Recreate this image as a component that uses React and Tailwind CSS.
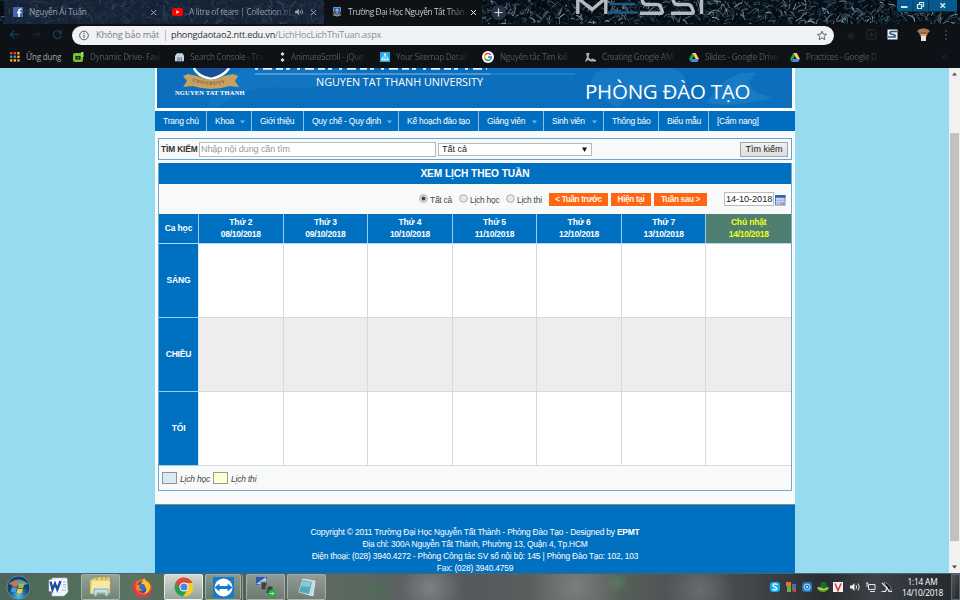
import React from "react";

const UI = "font-['Open_Sans','Noto_Sans',sans-serif]";
const ARIAL = "font-['Liberation_Sans',Arial,sans-serif]";

// Deterministic grass-like strokes for the browser theme
function makeBlades(count, seed) {
  let s = seed;
  const rnd = () => {
    s = (s * 16807) % 2147483647;
    return s / 2147483647;
  };
  const tones = ["#2d4250", "#1d4a60", "#5b737f", "#16303e", "#8a9ca5", "#000508", "#02080d"];
  return Array.from({ length: count }, () => {
    const x = rnd() * 960;
    const y = rnd() * 24;
    const dx = (rnd() - 0.5) * 16;
    const dy = (rnd() - 0.5) * 14;
    return {
      d: `M${x.toFixed(1)} ${y.toFixed(1)}q${(dx / 2 + 1).toFixed(1)} ${(dy / 2 - 2).toFixed(1)} ${dx.toFixed(1)} ${dy.toFixed(1)}`,
      c: tones[Math.floor(rnd() * tones.length)],
      w: 0.5 + rnd() * 0.7,
    };
  });
}
const blades = makeBlades(2400, 4217);

function Grass() {
  return (
    <svg className="absolute inset-0" width="960" height="24" viewBox="0 0 960 24">
      <rect width="960" height="24" fill="#070f17" />
      {blades.map((b, i) => (
        <path key={i} d={b.d} stroke={b.c} strokeWidth={b.w} fill="none" />
      ))}
      <rect x="4" width="320" height="24" fill="#1c2a40" opacity=".76" />
      <path d="M164 5v14" stroke="#3b4a5e" />
      <g stroke="#b4bac0" strokeWidth="3.4" fill="none">
        <path d="M577.8 14V-2L592 9.500 605.800-2V14" />
        <path d="M640 13.300H660.500Q663 13.300 662 10.500L660.500 7Q659.500 4.500 656.500 4.500H646Q643 4.500 642-1" />
        <path d="M671 13.300H691.500Q694 13.300 693 10.500L691.500 7Q690.500 4.500 687.500 4.500H677Q674 4.500 673-1" />
        <path d="M701.500 14V-2" />
      </g>
      <path d="M610 4h25M608 12.500h29" stroke="#1c5a84" strokeWidth="2.600" />
    </svg>
  );
}

function Close({ color = "#98a3ad" }) {
  return (
    <svg width="7" height="7" viewBox="0 0 7 7" className="shrink-0">
      <path d="M1 1l5 5M6 1L1 6" stroke={color} strokeWidth="1" />
    </svg>
  );
}

function Crest() {
  return (
    <svg width="10" height="10" viewBox="0 0 10 10" className="shrink-0">
      <path d="M1.500.5h7v4Q8 7 5 8.500 2 7 1.500 4.500z" fill="#2454a8" stroke="#a9bdd8" strokeWidth=".7" />
      <path d="M3 3h4M5 1.500v5" stroke="#dce6f2" strokeWidth=".8" />
      <path d="M.8 7.500Q5 10 9.200 7.500" stroke="#ab925b" strokeWidth="1.300" fill="none" />
    </svg>
  );
}

function TabStrip() {
  return (
    <div className="relative h-6 overflow-hidden bg-black">
      <Grass />
      <div className="relative flex h-6 text-[8.3px] leading-6 tracking-[-0.22px]">
        <div className="flex w-[168px] items-center pl-[13px] text-[#99a2ab]">
          <svg width="10" height="10" viewBox="0 0 10 10"><rect width="10" height="10" fill="#4167b2" /><path d="M6.800 10V6.200h1.400l.2-1.500H6.800v-1q0-.7.8-.7h.9V1.600H7.100Q5.200 1.600 5.200 3.500v1.200H4v1.500h1.200V10z" fill="#fff" /></svg>
          <span className="ml-[6px] w-[121px] whitespace-nowrap">Nguyễn Ái Tuấn</span>
          <Close />
        </div>
        <div className="flex w-[156px] items-center pl-1 text-[#8c959f]">
          <svg width="11" height="8" viewBox="0 0 11 8"><rect width="11" height="8" rx="1.800" fill="#f00" /><path d="M4.300 2.200v3.600L7.500 4z" fill="#fff" /></svg>
          <span className="ml-[6px] w-[106px] whitespace-nowrap bg-gradient-to-r from-[#99a2ab] from-80% to-[#2a3648] bg-clip-text tracking-[-0.3px] text-transparent">A litre of tears | Collection of</span>
          <svg width="9" height="8" viewBox="0 0 9 8"><path d="M0 2.800h1.700L4 1v6L1.700 5.200H0z" fill="#97a2ad" /><path d="M5.200 2.500q1 1.500 0 3M6.700 1.500q1.800 2.500 0 5" stroke="#97a2ad" strokeWidth=".8" fill="none" /></svg>
          <span className="w-[6px]" />
          <Close />
        </div>
        <div className="flex w-[158px] items-center rounded-t-[4px] bg-[#0e1217] pl-2 text-[#d5d8da]">
          <Crest />
          <span className="ml-[6px] w-[122px] whitespace-nowrap bg-gradient-to-r from-[#d5d8da] from-80% to-[#2b2f34] to-97% bg-clip-text tracking-[-0.38px] text-transparent">Trường Đại Học Nguyễn Tất Thàn</span>
          <Close color="#e8eaec" />
        </div>
        <div className="flex w-[415px] items-center pl-[9px]">
          <svg width="15" height="15" viewBox="0 0 15 15"><circle cx="7.500" cy="7.500" r="7.500" fill="#273447" /><path d="M3.500 7.500h8M7.500 3.500v8" stroke="#d5dadf" strokeWidth="1.200" /></svg>
        </div>
        <div className="h-3 w-[60px] overflow-hidden rounded-b-[2px] border-b border-[#07304a] bg-[#05598c]">
          <svg width="60" height="12" viewBox="0 0 60 12">
            <path d="M16 0v12M31.500 0v12" stroke="#033b60" />
            <path d="M4 7h6.500" stroke="#d6e4ec" strokeWidth="2" />
            <path d="M20.500 4.500h4v4h-4zM22.500 4V2.500h4v4H25" stroke="#d6e4ec" strokeWidth="1.200" fill="none" />
            <path d="M43.500 3.200l4.500 4.500M48 3.200l-4.500 4.500" stroke="#d6e4ec" strokeWidth="1.500" />
          </svg>
        </div>
      </div>
    </div>
  );
}

function Toolbar() {
  return (
    <div className="flex h-[22px] items-center bg-[#0e1217]">
      <svg width="72" height="22" viewBox="0 0 72 22" fill="none" strokeWidth="1.300">
        <path d="M19 10.500h-8.500M14.200 6.500l-4 4 4 4" stroke="#123d51" />
        <path d="M32 10.500h8M36.500 7l3.500 3.500-3.500 3.500" stroke="#122631" />
        <path d="M60.500 8A4 4 0 1 0 61.300 11.500" stroke="#124459" />
        <path d="M61.800 6v3.700h-3.700z" fill="#124459" stroke="none" />
      </svg>
      <div className="flex h-[19px] w-[762px] items-center rounded-full bg-[#f1f2f3] text-[9.2px]">
        <svg width="24" height="19" viewBox="0 0 24 19"><circle cx="12" cy="9.500" r="4.300" fill="none" stroke="#55585b" /><path d="M12 8.700v3M12 6.800v1.100" stroke="#55585b" strokeWidth="1.100" /></svg>
        <span className="w-[69px] whitespace-nowrap tracking-[-0.17px] text-[#777b7e]">Không bảo mật</span>
        <span className="mr-[5px] h-[11px] w-px bg-[#bcbec0]" />
        <span className="flex-1 whitespace-nowrap tracking-[-0.21px] text-[#8b8f92]"><span className="text-[#303336]">phongdaotao2.ntt.edu.vn</span>/LichHocLichThiTuan.aspx</span>
        <svg width="24" height="19" viewBox="0 0 24 19"><path d="M12 5.200l1.300 2.900 3.200.3-2.400 2.100.7 3.100L12 11.900l-2.800 1.700.7-3.100-2.400-2.100 3.200-.3z" fill="none" stroke="#606467" strokeWidth="1" /></svg>
      </div>
      <svg width="126" height="22" viewBox="0 0 126 22">
        <path d="M13 12l4-4 4 4-2 3h-4z" fill="#1a1f24" />
        <rect x="33" y="6" width="9" height="9" rx="1" fill="none" stroke="#242a30" /><path d="M37.500 8v5M35 10.500h5" stroke="#242a30" />
        <rect x="53.500" y="5.500" width="10" height="10" fill="#e8eef2" /><path d="M63 7.500h-5q-2.500 0-2 1.500t3 1.500 2 2.500h-7" stroke="#285d82" strokeWidth="1.700" fill="none" />
        <circle cx="89.500" cy="9" r="4.500" fill="#7c4d26" /><ellipse cx="89.500" cy="7.200" rx="6" ry="2.600" fill="#a17b4c" /><circle cx="89.500" cy="10.500" r="3" fill="#d7a07a" /><path d="M87 12h5v5h-5z" fill="#e9e4df" /><path d="M87 9h5" stroke="#432a1c" />
        <path d="M111 6h2v2h-2zM111 10h2v2h-2zM111 14h2v2h-2z" fill="#124459" />
      </svg>
    </div>
  );
}

function Drive() {
  return (
    <svg width="10" height="9" viewBox="0 0 10 9"><path d="M3.300 0L0 6l1.700 3L5 3z" fill="#11a861" /><path d="M3.300 0h3.400L10 6H6.700z" fill="#ffd04b" /><path d="M3.400 6H10L8.300 9H1.700z" fill="#4688f4" /></svg>
  );
}

const bookmarkIcons = {
  apps: <svg width="10" height="10" viewBox="0 0 10 10">{[["#e94335", "#e94335", "#f5a623"], ["#34a853", "#4285f4", "#fbbc05"], ["#f5a623", "#fbbc05", "#e9a335"]].map((r, j) => r.map((c, i) => <rect key={i + "-" + j} x={i * 3.6} y={j * 3.6} width="2.400" height="2.400" fill={c} />))}</svg>,
  dd: <svg width="11" height="10" viewBox="0 0 11 10"><rect y="1" width="10" height="9" rx="2" fill="#76bd38" /><path d="M8 0h2.500v5H8z" fill="#9bd761" /><path d="M2.500 4h5v3.500h-5z" fill="#14250c" /><path d="M4 5.700h2" stroke="#9bd761" strokeWidth=".8" /></svg>,
  search: <svg width="10" height="9" viewBox="0 0 10 9"><path d="M2 0h6l2 3v5.500H0V3z" fill="#cbd5df" /><path d="M2.500 8.500v-4h5v4" fill="#587aa3" /><path d="M4.300 5v3.500M5.800 5v3.500" stroke="#e8edf2" strokeWidth=".7" /></svg>,
  anim: <svg width="5" height="10" viewBox="0 0 5 10"><path d="M2.500 0l2 2-2 2-2-2zM2.500 6l2 2-2 2-2-2z" fill="#dfe3e5" /></svg>,
  sitemap: <svg width="10" height="10" viewBox="0 0 10 10"><rect width="10" height="10" fill="#20aae5" /><path d="M5 2v3M2.500 7V5h5v2" stroke="#bbe9fb" fill="none" /><path d="M3.700 1.500h2.600v2H3.700zM1.200 6.500h2.500v2H1.200zM6.300 6.500h2.500v2H6.300zM3.900 6.500H6v2H3.900z" fill="#d5f3fd" /></svg>,
  google: <svg width="12" height="12" viewBox="0 0 12 12"><circle cx="6" cy="6" r="6" fill="#fff" /><g fill="none" strokeWidth="1.600"><path d="M8.700 3.900A3.400 3.400 0 0 0 3.100 4.200" stroke="#ea4335" /><path d="M3.100 4.200a3.400 3.400 0 0 0 0 3.600" stroke="#fbbc05" /><path d="M3.100 7.800a3.400 3.400 0 0 0 5.100.8" stroke="#34a853" /><path d="M6 6.100h3.400q0 1.600-1.200 2.500" stroke="#4285f4" /></g></svg>,
  amp: <svg width="11" height="9" viewBox="0 0 11 9"><path d="M1 0h3.500L3.500 4.500 6 6.500l1.500-1L11 7v1.500H5.500L3 7 1 8.500H0L2 4z" fill="#b5b0a4" /></svg>,
  drive: <Drive />,
};

function Bookmark({ icon, text, className, bright }) {
  return (
    <div className={"flex shrink-0 items-center " + className}>
      {bookmarkIcons[icon]}
      <span className={"flex-1 whitespace-nowrap pl-[6px] " + (bright ? "text-[#a4a7a9]" : "bg-gradient-to-r from-[#575c60] from-82% to-[#1c2024] bg-clip-text text-transparent")}>{text}</span>
    </div>
  );
}

function Bookmarks() {
  return (
    <div className="flex h-[22px] items-center bg-[#0e1217] pl-[10px] text-[8.1px] leading-[14px] tracking-[-0.22px]">
      <Bookmark icon="apps" text="Ứng dụng" bright className="mr-[11px] w-[52px]" />
      <Bookmark icon="dd" text="Dynamic Drive- Favi" className="mr-[13px] w-[89px]" />
      <Bookmark icon="search" text="Search Console - Tra" className="mr-[17px] w-[88px]" />
      <Bookmark icon="anim" text="AnimateScroll - jQue" className="mr-[14px] w-[86px]" />
      <Bookmark icon="sitemap" text="Your Sitemap Detail" className="mr-[14px] w-[88px]" />
      <Bookmark icon="google" text="Nguyên tắc Tìm kiế" className="mr-[13px] w-[90px]" />
      <Bookmark icon="amp" text="Creating Google AM" className="mr-[13px] w-[91px]" />
      <Bookmark icon="drive" text="Slides - Google Drive" className="mr-[11px] w-[90px]" />
      <Bookmark icon="drive" text="Practices - Google D" className="mr-[61px] w-[90px]" />
      <svg width="6" height="6" viewBox="0 0 6 6"><path d="M.5 1l2 2-2 2M3.500 1l2 2-2 2" stroke="#104052" fill="none" /></svg>
    </div>
  );
}

function Banner() {
  return (
    <div className="relative ml-[2px] h-10 w-[635px] overflow-hidden bg-[#0b6fbd]">
      <svg className="absolute inset-0" width="635" height="40" viewBox="0 0 635 40">
        <path d="M60 40Q90 15 130 20T190 0H90Q60 10 50 40z" fill="#1679c5" opacity=".6" />
        <path d="M435 20Q430 0 460 0h55Q540 10 520 28 480 15 460 40z" fill="#1c80c9" opacity=".6" />
        <path d="M550 35Q570 0 600 5 580 20 615 30 580 40 550 35z" fill="#1c80c9" opacity=".7" />
        <path d="M37 0Q40 8 54 11 67 8 72 0" fill="#174f98" stroke="#fff" strokeWidth="2.500" />
        <path d="M26 8l5-2 9 2q14 7 27 0l9-2 5 2-3 5 4 6-10-1q-18 6-36 0l-10 1 4-6z" fill="#c6a160" />
        <path id="ribbon" d="M35 13.500Q54 20 75 13.500" fill="none" />
        <text fontSize="5" fontFamily="Liberation Serif" fill="#5a4927" letterSpacing=".4"><textPath href="#ribbon">UNIVERSITY</textPath></text>
        <path d="M98 .8h232" stroke="#e9f3fa" strokeWidth="1.800" strokeDasharray="3 5 9 4 7 3 4 7" />
        <path d="M98 6h235" stroke="#8fc0e4" />
        <path d="M333 6h85" stroke="#3b8dcb" />
      </svg>
      <div className="absolute left-[18px] top-[20px] whitespace-nowrap font-['Liberation_Serif',serif] text-[6.5px] font-bold leading-[10px] tracking-[0.15px] text-white">NGUYEN TAT THANH</div>
      <div className={UI + " absolute left-[159px] top-[6px] whitespace-nowrap text-[10.8px] leading-4 text-white"}>NGUYEN TAT THANH UNIVERSITY</div>
      <div className="absolute left-[428px] top-[9px] whitespace-nowrap font-['Open_Sans',sans-serif] text-[20.5px] leading-7 tracking-[-0.25px] text-white">PHÒNG ĐÀO TẠO</div>
    </div>
  );
}

const nav = [
  ["Trang chủ", "w-[52px]", false],
  ["Khoa", "w-[45px]", true],
  ["Giới thiệu", "w-[52px]", false],
  ["Quy chế - Quy định", "w-[95px]", true],
  ["Kế hoạch đào tạo", "w-[80px]", false],
  ["Giảng viên", "w-[65px]", true],
  ["Sinh viên", "w-[60px]", true],
  ["Thông báo", "w-[55px]", false],
  ["Biểu mẫu", "w-[50px]", false],
  ["[Cẩm nang]", "flex-1", false],
];

function Nav() {
  return (
    <nav className="flex h-5 shrink-0 bg-[#006fc1] text-[8.5px] leading-5 tracking-[-0.24px] text-white">
      {nav.map(([label, w, arrow], i) => (
        <div key={label} className={"flex shrink-0 items-center justify-between whitespace-nowrap pl-2 pr-[6px] " + w + (i < 9 ? " border-r border-[#8ebfe3]" : "")}>
          <span>{label}</span>
          {arrow && <svg width="5" height="4" viewBox="0 0 5 4" className="mt-px"><path d="M0 .5h5L2.500 3.500z" fill="#75b4e3" /></svg>}
        </div>
      ))}
    </nav>
  );
}

function SearchRow() {
  return (
    <div className="mx-[3px] mt-[7px] flex h-[22px] shrink-0 items-center border border-[#6ba3cf] bg-[#f7f9fa] pl-[2px] text-[9px]">
      <b className="w-[38px] whitespace-nowrap text-[8.3px] tracking-[-0.1px] text-[#333]">TÌM KIẾM</b>
      <div className="h-[15px] w-[237px] border border-[#b8b8b8] bg-white pl-px leading-[13px] tracking-[-0.08px] text-[#999]">Nhập nội dung cần tìm</div>
      <div className="ml-[2px] flex h-[13px] w-[154px] items-center justify-between border border-[#b8b8b8] bg-white pl-[3px] pr-[4px] leading-3 text-[#222]">
        <span>Tất cả</span>
        <svg width="5" height="5" viewBox="0 0 5 5"><path d="M0 .5h5L2.500 5z" fill="#111" /></svg>
      </div>
      <div className="ml-[148px] h-[15px] w-[48px] border border-[#a5a5a5] bg-gradient-to-b from-[#f1f1f1] to-[#dcdcdc] text-center leading-[13px] text-[#222]">Tìm kiếm</div>
    </div>
  );
}

function Radio({ on }) {
  return (
    <svg width="9" height="9" viewBox="0 0 9 9" className="mb-[3px] mr-[2px] shrink-0"><circle cx="4.500" cy="4.500" r="3.800" fill={on ? "#e2e2e2" : "#e9e9e9"} stroke="#a5a5a5" strokeWidth=".9" />{on && <circle cx="4.500" cy="4.500" r="2" fill="#444" />}</svg>
  );
}

function Options() {
  const btn = "h-[13px] bg-[#ff6611] text-center text-[8.2px] leading-[13px] text-[#fff4e9] whitespace-nowrap font-bold tracking-[-0.35px] ";
  return (
    <div className="flex h-[30px] items-center pl-[260px] text-[8.4px] tracking-[-0.22px] text-[#444]">
      <div className="flex w-[40px] items-center whitespace-nowrap pt-[2px]"><Radio on /><span className="pt-px">Tất cả</span></div>
      <div className="flex w-[47px] items-center whitespace-nowrap pt-[2px]"><Radio /><span className="pt-px">Lịch học</span></div>
      <div className="flex w-[43px] items-center whitespace-nowrap pt-[2px]"><Radio /><span className="pt-px">Lịch thi</span></div>
      <div className={btn + "w-[59px]"}>&lt; Tuần trước</div>
      <div className={btn + "ml-[3px] w-[40px]"}>Hiện tại</div>
      <div className={btn + "ml-[3px] w-[53px]"}>Tuần sau &gt;</div>
      <div className="ml-[17px] h-[14px] w-[50px] whitespace-nowrap border border-[#bbb] bg-white pl-px text-[9.2px] leading-[13px] tracking-[-0.08px] text-[#222]">14-10-2018</div>
      <svg width="11" height="11" viewBox="0 0 11 11" className="ml-px mt-[3px]"><rect x=".5" y=".5" width="9.500" height="9.500" fill="#dfe8f8" stroke="#5c82c6" /><path d="M0 1.500h10.500" stroke="#315caa" strokeWidth="2.500" /><path d="M3 3v7M5.500 3v7M8 3v7M1 5.300h9M1 7.700h9" stroke="#86a3d8" strokeWidth=".7" /><path d="M6 8h3v2H6z" fill="#d08a78" /></svg>
    </div>
  );
}

const days = [
  ["Thứ 2", "08/10/2018"],
  ["Thứ 3", "09/10/2018"],
  ["Thứ 4", "10/10/2018"],
  ["Thứ 5", "11/10/2018"],
  ["Thứ 6", "12/10/2018"],
  ["Thứ 7", "13/10/2018"],
  ["Chủ nhật", "14/10/2018"],
];

function Schedule() {
  return (
    <div className="text-[8.5px] font-bold tracking-[-0.15px] text-white">
      <div className="flex h-[30px] border-b border-[#add7f2]">
        <div className="w-10 shrink-0 border-r border-[#9acdf0] bg-[#0070c1] text-center leading-[29px]">Ca học</div>
        <div className="grid flex-1 grid-cols-7">
          {days.map(([d, date], i) => (
            <div key={date} className={"pt-[3px] text-center leading-[11.5px] " + (i === 6 ? "bg-[#4f7f70] text-[#f0ff15]" : "border-r border-[#9acdf0] bg-[#0070c1]")}>
              <div>{d}</div>
              <div className="tracking-[-0.25px]">{date}</div>
            </div>
          ))}
        </div>
      </div>
      {["SÁNG", "CHIỀU", "TỐI"].map((s, r) => (
        <div key={s} className="flex h-[74px]">
          <div className="w-10 shrink-0 border-b border-r border-b-[#9acdf0] border-r-[#d8e8f2] bg-[#0070c1] text-center leading-[72px]">{s}</div>
          <div className={"grid flex-1 grid-cols-7 border-b border-[#d9d9d9] " + (r === 1 ? "bg-[#ededed]" : "bg-white")}>
            {days.map(([d], i) => <div key={d} className={i < 6 ? "border-r border-[#d9d9d9]" : ""} />)}
          </div>
        </div>
      ))}
    </div>
  );
}

function Site() {
  return (
    <div className={ARIAL + " flex h-[505px] w-[640px] flex-col overflow-hidden bg-[#f8fafb]"}>
      <div className="h-[43px] shrink-0 bg-white"><Banner /></div>
      <Nav />
      <SearchRow />
      <section className="mx-[3px] mt-[3px] h-[328px] shrink-0 border border-t-0 border-[#73a9d1] bg-[#f8fafa]">
        <h1 className="h-[21px] bg-[#0070c1] text-center text-[10.2px] font-bold leading-[21px] tracking-[-0.1px] text-white">XEM LỊCH THEO TUẦN</h1>
        <Options />
        <Schedule />
        <div className="flex h-[24px] items-center pl-[3px] text-[8.5px] italic tracking-[-0.2px] text-[#444]">
          <span className="mr-[3px] h-[12px] w-[15px] border border-[#8f9499] bg-[#d9e9f7]" />
          <span className="w-[33px] whitespace-nowrap pt-0.5">Lịch học</span>
          <span className="mr-[3px] h-[12px] w-[15px] border border-[#9b9a82] bg-[#ffffd8]" />
          <span className="whitespace-nowrap pt-0.5">Lịch thi</span>
        </div>
      </section>
      <footer className="mt-[13px] h-[69px] shrink-0 border-t border-[#7c8d8c] bg-[#0070c1] pt-[21px] text-center text-[8.4px] leading-[12px] tracking-[-0.18px] text-white">
        <div>Copyright © 2011 Trường Đại Học Nguyễn Tất Thành - Phòng Đào Tạo - Designed by <b>EPMT</b></div>
        <div>Địa chỉ: 300A Nguyễn Tất Thành, Phường 13, Quận 4, Tp.HCM</div>
        <div>Điện thoại: (028) 3940.4272 - Phòng Công tác SV số nội bộ: 145 | Phòng Đào Tạo: 102, 103</div>
        <div>Fax: (028) 3940.4759</div>
      </footer>
    </div>
  );
}

function Scrollbar() {
  return (
    <div className="flex w-[11px] flex-col items-center bg-[#f1f1f1]">
      <svg width="11" height="12" viewBox="0 0 11 12"><path d="M3 7.500h5L5.500 4.500z" fill="#555" /></svg>
      <div className="mt-[53px] h-[408px] w-[9px] bg-[#c1c1c1]" />
      <svg width="11" height="12" viewBox="0 0 11 12" className="mt-auto"><path d="M3 4.500h5L5.500 7.500z" fill="#444" /></svg>
    </div>
  );
}

const taskBtn = "flex h-[26px] shrink-0 items-center justify-center rounded-[2px] border bg-gradient-to-b ";
const dimBtn = "border-[#b4c1ba]/70 from-white/35 to-white/15 ";

function Taskbar() {
  return (
    <div className="flex h-[27px] shrink-0 items-center overflow-hidden border-t border-[#4c6273] bg-[radial-gradient(circle_at_378px_18px,#4f6b56_0,transparent_16px),radial-gradient(circle_at_430px_14px,#7d7f82_0,transparent_32px),radial-gradient(circle_at_575px_12px,#7b7d7f_0,transparent_45px),radial-gradient(circle_at_617px_8px,#547a5c_0,transparent_12px),radial-gradient(circle_at_700px_16px,#6a6c70_0,transparent_35px),linear-gradient(90deg,#4b6656_0%,#5a7362_14%,#496150_22%,#5d685f_34%,#596861_38%,#5c5f61_42%,#55595b_50%,#606363_60%,#566159_64%,#505356_70%,#42474b_78%,#292d31_86%,#3c4147_91%,#22272b_100%)]">
      <div className="flex w-[80px] shrink-0 items-center pl-[6px]">
        <svg width="25" height="25" viewBox="0 0 25 25">
          <defs><radialGradient id="orb" cx=".5" cy=".85"><stop stopColor="#55c5e9" /><stop offset=".6" stopColor="#2368a1" /><stop offset="1" stopColor="#163e66" /></radialGradient></defs>
          <circle cx="12.500" cy="12.500" r="11.500" fill="url(#orb)" stroke="#809daf" strokeWidth=".7" />
          <path d="M2.500 9Q12 0 22.500 9 12 12 2.500 9z" fill="#d9edf7" opacity=".45" />
          <path d="M7 7.500q2.500-1.500 5 0l-1 4.500q-2.500-1.200-5 0z" fill="#f2692b" /><path d="M13 8q2.500 1.300 5.500 0l-1.200 4.500q-2.800 1.300-5.200 0z" fill="#8ec73f" />
          <path d="M5.800 13q2.500-1.300 5 0l-1.100 4.500q-2.500-1.400-5 0z" fill="#3e9fe2" /><path d="M11.800 13.500q2.500 1.300 5.200 0L15.800 18q-2.800 1.300-5.100 0z" fill="#fbc92f" />
        </svg>
        <svg width="21" height="20" viewBox="0 0 21 20" className="ml-[17px]"><path d="M4 1h15l1 14-4 4H4z" fill="#f2f6fb" stroke="#b6c3d5" strokeWidth=".6" /><path d="M1 3l12-2v15L1 14z" fill="#fff" stroke="#c4d2e5" strokeWidth=".5" /><path d="M2.500 4.500l2 8 2.500-6 2.300 6L12.500 4" fill="none" stroke="#1d4b9d" strokeWidth="2.300" /><path d="M15 5h3M15 7.500h3M15 10h3M14 13h4" stroke="#92aad0" strokeWidth=".8" /></svg>
      </div>
      <div className={taskBtn + dimBtn + "ml-px w-[39px]"}>
        <svg width="23" height="22" viewBox="0 0 23 22"><path d="M1 4l7-3h13v17H1z" fill="#ead273" stroke="#b99743" strokeWidth=".6" /><path d="M3 5h18l-1 12H2z" fill="#f8e9a4" /><path d="M8 1v3M13 1v3M17 1v3" stroke="#819b60" /><path d="M5 13h14v7h-3v-3H8v3H5z" fill="#c1e1f1" stroke="#629bbd" strokeWidth=".8" /></svg>
      </div>
      <svg width="21" height="21" viewBox="0 0 21 21" className="ml-3 shrink-0">
        <circle cx="10.500" cy="11" r="9" fill="#f66b1c" /><path d="M4 3Q0 7 1 12q2 8 10 8 7 0 9-8l-4 3q-4 4-9 1T4 3z" fill="#e9344b" />
        <circle cx="11" cy="10" r="6" fill="#304fa8" /><path d="M12 1q1 3 5 5 2 4 0 8-2 3-5 3 4-4 1-7-3 1-5-2 3-4 4-7z" fill="#ffc127" /><circle cx="9.500" cy="10.500" r="3.800" fill="#3471bd" /><path d="M5 8q2-1 3 1l-1 2 3 2q-3 3-6-1z" fill="#fa861e" />
      </svg>
      <div className={taskBtn + "ml-[11px] w-[39px] border-white/70 from-white/75 to-white/40"}>
        <svg width="20" height="20" viewBox="0 0 20 20"><circle cx="10" cy="10" r="9.500" fill="#f8cb27" /><path d="M10 10L1.800 5.200A9.500 9.500 0 0 0 9 19.500L14 12z" fill="#279c54" /><path d="M1.800 5.200A9.500 9.500 0 0 1 18.500 6H10L6 12z" fill="#dd493c" /><circle cx="10" cy="10" r="4.600" fill="#fff" /><circle cx="10" cy="10" r="3.600" fill="#4386eb" /></svg>
      </div>
      <div className={taskBtn + dimBtn + "ml-[2px] w-[36px]"}>
        <svg width="21" height="21" viewBox="0 0 21 21"><rect width="21" height="21" fill="#147bcf" /><circle cx="10.500" cy="10.500" r="9" fill="#fff" /><path d="M1.500 10.500l5-4V9h8V6.500l5 4-5 4V12h-8v2.500z" fill="#147bcf" /></svg>
      </div>
      <div className="h-[25px] w-[2px] border-r border-[#bbc5bf]/60" />
      <div className={taskBtn + dimBtn + "ml-[3px] w-[39px]"}>
        <svg width="22" height="22" viewBox="0 0 22 22"><path d="M1 1h11v8H1z" fill="#2e59a9" /><path d="M1 8L11 1l1 8z" fill="#a8cbed" /><path d="M6 6h6v8H6zM11 10h7v8h-7z" fill="#3f4243" stroke="#858987" /><circle cx="17" cy="17.500" r="4" fill="#2da438" /><path d="M14.500 17.500h4M17 15.500l2 2-2 2" stroke="#baf0bd" fill="none" /></svg>
      </div>
      <div className={taskBtn + dimBtn + "ml-[2px] w-[39px]"}>
        <svg width="20" height="19" viewBox="0 0 20 19"><path d="M6 1l12 2-2 15-14-4z" fill="#c4dce0" stroke="#eff7f7" strokeWidth=".7" /><path d="M6 2l9 2-3 12-10-2z" fill="#54a9b8" /><path d="M6 3l8 1-1 5-9-1z" fill="#8acbd2" /></svg>
      </div>
      <div className={UI + " ml-auto flex items-center text-white"}>
        <svg width="124" height="14" viewBox="0 0 124 14">
          <rect y="2" width="10" height="10" rx="3" fill="#14aeee" /><path d="M7.500 4.500q-4-1.500-4.500.7Q3 6.500 5 7t2 1.800Q6 10.500 2.500 9.300" fill="none" stroke="#fff" strokeWidth="1.300" />
          <path d="M16 2h5v4h-5z" fill="#ed6f37" /><path d="M17 6h4v6h-4z" fill="#6cad38" /><path d="M22 4h4v7h-4z" fill="#3976bb" /><path d="M23 8h3v4h-3z" fill="#d9422f" />
          <rect x="32" y="2" width="10" height="10" rx="3" fill="#2678bd" /><circle cx="37" cy="7" r="3" fill="none" stroke="#b8def4" /><circle cx="37" cy="7" r="1.100" fill="#e5f5ff" />
          <path d="M47 7h12q-1 5-6 5t-6-5z" fill="#39a442" /><path d="M51 2h5v3h2l-4 4-5-4h2z" fill="#15702a" /><path d="M48 8q6 3 10 0" stroke="#eac22a" strokeWidth="1.500" fill="none" />
          <rect x="63" y="2" width="10" height="10" fill="#f8f0ef" /><path d="M65 3.500l3 7 3-7" stroke="#c53c3d" strokeWidth="1.500" fill="none" />
          <path d="M80 5.500h2L84.500 3v8L82 8.500h-2z" fill="#edf0f1" /><path d="M86 5q1.300 2 0 4M88 3.500q2.500 3.500 0 7" stroke="#edf0f1" fill="none" strokeWidth=".9" />
          <path d="M98.500 4.500h6.500v5h-6.500z" stroke="#e4e7e9" fill="#41464b" /><path d="M96 3h2.500M97 3v4M100 11.500h5" stroke="#e4e7e9" fill="none" />
          <path d="M114 2.500q6 1 7.500 8l-4-1.500z" fill="#0d1011" stroke="#9da2a5" strokeWidth=".7" /><path d="M112 3l5 5M111.500 11.500h4l1.500-4 2 4h3" stroke="#e4e7e9" fill="none" strokeWidth="1.200" />
        </svg>
        <div className="w-[57px] text-center text-[8.3px] leading-[11.5px] tracking-[-0.2px]"><div>1:14 AM</div><div className="whitespace-nowrap tracking-[-0.3px]">14/10/2018</div></div>
        <div className="h-[26px] w-[9px] border border-[#5c666d] bg-gradient-to-br from-white/20 to-transparent" />
      </div>
    </div>
  );
}

export default function App() {
  return (
    <div className={UI + " flex h-[600px] w-[960px] flex-col overflow-hidden"}>
      <TabStrip />
      <Toolbar />
      <Bookmarks />
      <div className="flex h-[505px] shrink-0 bg-[#97dbf1] pl-[155px]">
        <Site />
        <div className="flex-1" />
        <Scrollbar />
      </div>
      <Taskbar />
    </div>
  );
}
